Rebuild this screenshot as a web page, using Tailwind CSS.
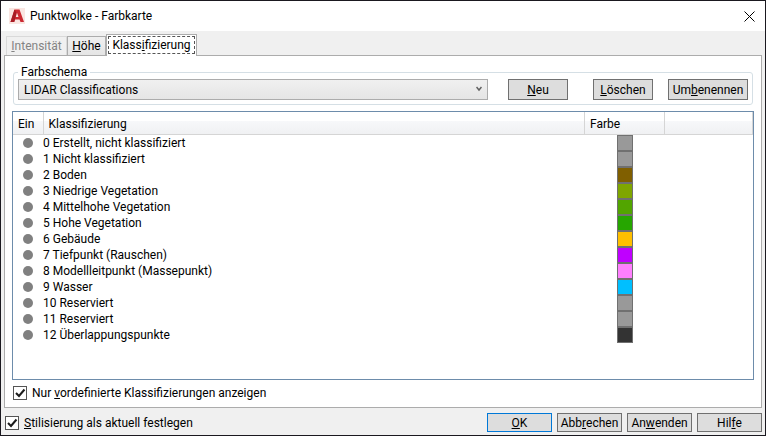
<!DOCTYPE html>
<html lang="de">
<head>
  <meta charset="UTF-8" />
  <meta name="viewport" content="width=device-width, initial-scale=1.0" />
  <title>Punktwolke - Farbkarte</title>
  <script src="https://cdn.jsdelivr.net/npm/@tailwindcss/browser@4"></script>
</head>
<body class="min-h-screen flex flex-col border border-[#1a181f] bg-[#f0f0f0] text-black text-[12px] leading-4 font-[Roboto,'Open_Sans',sans-serif]">

  <!-- Title bar -->
  <header class="flex items-center h-[30px] pl-2 pr-2 bg-white">
    <svg class="size-4" viewBox="0 0 16 16" aria-hidden="true">
      <rect width="16" height="16" fill="#fae6e2" />
      <path d="M1.500 14 5.500 1.500h5L15 14h-3.500l-1-2.500H6.200L5.200 14z" fill="#cb2a32" />
      <path d="M5.500 1.500 1.500 14h3.700L7.500 5z" fill="#a81c24" />
      <path d="M8 4.800 6.800 9h2.700z" fill="#fae6e2" />
    </svg>
    <h1 class="ml-[5px]">Punktwolke - Farbkarte</h1>
    <button type="button" aria-label="Schließen" class="ml-auto p-[2px]">
      <svg class="size-[11px]" viewBox="0 0 11 11" fill="none" stroke="#000" aria-hidden="true">
        <path d="M.5.5l10 10M10.500.5l-10 10" />
      </svg>
    </button>
  </header>

  <!-- Tabs -->
  <div role="tablist" class="flex items-end h-6 px-[5px]">
    <button type="button" role="tab" disabled class="w-[61px] h-[19px] border border-b-0 border-[#d9d9d9] text-[#838383]"><u>I</u>ntensität</button>
    <button type="button" role="tab" class="w-[39px] h-[19px] border border-b-0 border-[#acacac] bg-linear-to-b from-[#f0f0f0] to-[#e5e5e5]"><u>H</u>öhe</button>
    <button type="button" role="tab" aria-selected="true" class="relative z-10 w-[91px] h-[22px] -mb-px border border-b-0 border-[#acacac] bg-white p-px pb-[2px]">
      <span class="block h-[18px] border border-dashed border-[#555] leading-4">Klass<u>i</u>fizierung</span>
    </button>
  </div>

  <main class="flex-1 flex flex-col mx-[3px] px-[7px] pt-[9px] pb-[6px] border border-[#acacac] bg-white">
    <fieldset class="mx-px px-1 pb-1 border border-[#d5dfe5] rounded-[3px]">
      <legend class="px-[3px] leading-[14px]">Farbschema</legend>
      <div class="flex">
        <div class="relative flex-1">
          <select aria-label="Farbschema" class="block w-full h-[21px] pl-[5px] appearance-none border border-[#acacac] bg-linear-to-b from-[#f0f0f0] to-[#e5e5e5]">
            <option>LIDAR Classifications</option>
          </select>
          <svg class="absolute right-[6px] top-[7px] w-[6px] h-[6px] pointer-events-none" viewBox="0 0 6 6" fill="none" stroke="#606060" stroke-width="1.500" aria-hidden="true">
            <path d="M.5 1 3 4 5.500 1" />
          </svg>
        </div>
        <button type="button" class="w-[60px] h-[21px] ml-5 border border-[#707070] bg-[#ddd]"><u>N</u>eu</button>
        <button type="button" class="w-[60px] h-[21px] ml-[25px] border border-[#707070] bg-[#ddd]"><u>L</u>öschen</button>
        <button type="button" class="w-[80px] h-[21px] ml-[15px] border border-[#707070] bg-[#ddd]">Um<u>b</u>enennen</button>
      </div>
    </fieldset>

    <!-- Classification list -->
    <div class="flex-1 mt-[6px] border border-[#6d8cab]">
      <table class="w-full table-fixed">
        <colgroup>
          <col class="w-[30px]" />
          <col />
          <col class="w-[80px]" />
          <col class="w-[88px]" />
        </colgroup>
        <thead>
          <tr class="h-[22px] bg-linear-to-b from-white from-40% via-[#f7f8fa] via-40% to-[#f0f1f3] text-left">
            <th class="p-0 pl-[5px] pt-[2px] border-r border-b border-[#d5d5d5] font-normal">Ein</th>
            <th class="p-0 pl-[5px] pt-[2px] border-r border-b border-[#d5d5d5] font-normal">Klassifizierung</th>
            <th class="p-0 pl-[5px] pt-[2px] border-r border-b border-[#d5d5d5] font-normal">Farbe</th>
            <td class="p-0 border-r border-b border-[#d5d5d5]"></td>
          </tr>
        </thead>
        <tbody id="classRows"></tbody>
      </table>
    </div>

    <div class="mt-[5px] flex">
      <label class="flex items-center gap-[5px]">
        <span class="relative flex">
          <input type="checkbox" checked class="peer ml-px size-[14px] appearance-none border border-[#555] bg-white" />
          <svg class="absolute left-px top-0 size-[14px] hidden peer-checked:block pointer-events-none" viewBox="0 0 14 14" fill="none" stroke="#1c1c1c" stroke-width="2" aria-hidden="true">
            <path d="M3 7l3 3L11.500 3.500" />
          </svg>
        </span>
        <span>Nur <u>v</u>ordefinierte Klassifizierungen anzeigen</span>
      </label>
    </div>
  </main>

  <footer class="flex items-center px-[3px] pt-[5px] pb-[3px]">
    <label class="flex items-center gap-[5px]">
      <span class="relative flex">
        <input type="checkbox" checked class="peer ml-px size-[14px] appearance-none border border-[#555] bg-white" />
        <svg class="absolute left-px top-0 size-[14px] hidden peer-checked:block pointer-events-none" viewBox="0 0 14 14" fill="none" stroke="#1c1c1c" stroke-width="2" aria-hidden="true">
          <path d="M3 7l3 3L11.500 3.500" />
        </svg>
      </span>
      <span><u>S</u>tilisierung als aktuell festlegen</span>
    </label>
    <div class="ml-auto flex gap-[5px]">
      <button type="button" class="w-[65px] h-[19px] border border-[#0078d7] bg-[#ddd]"><u>O</u>K</button>
      <button type="button" class="w-[65px] h-[19px] border border-[#707070] bg-[#ddd]">Abb<u>r</u>echen</button>
      <button type="button" class="w-[65px] h-[19px] border border-[#707070] bg-[#ddd]">An<u>w</u>enden</button>
      <button type="button" class="w-[65px] h-[19px] border border-[#707070] bg-[#ddd]">Hil<u>f</u>e</button>
    </div>
  </footer>

  <script>
    const classes = [
      ["Erstellt, nicht klassifiziert", "#999999"],
      ["Nicht klassifiziert", "#999999"],
      ["Boden", "#805f00"],
      ["Niedrige Vegetation", "#7fa600"],
      ["Mittelhohe Vegetation", "#52a500"],
      ["Hohe Vegetation", "#26a600"],
      ["Gebäude", "#ffbf00"],
      ["Tiefpunkt (Rauschen)", "#bf00ff"],
      ["Modellleitpunkt (Massepunkt)", "#ff7fff"],
      ["Wasser", "#00bfff"],
      ["Reserviert", "#999999"],
      ["Reserviert", "#999999"],
      ["Überlappungspunkte", "#333333"],
    ];

    document.getElementById("classRows").innerHTML = classes.map(([name, color], i) => `
      <tr class="h-4">
        <td class="p-0"><div class="size-[10px] ml-[10px] rounded-full bg-[#808080]"></div></td>
        <td class="p-0 whitespace-nowrap">${i} ${name}</td>
        <td class="p-0"><div class="size-4 mx-auto border border-[#707070]" style="background-color: ${color}"></div></td>
        <td class="p-0"></td>
      </tr>`).join("");
  </script>
</body>
</html>
